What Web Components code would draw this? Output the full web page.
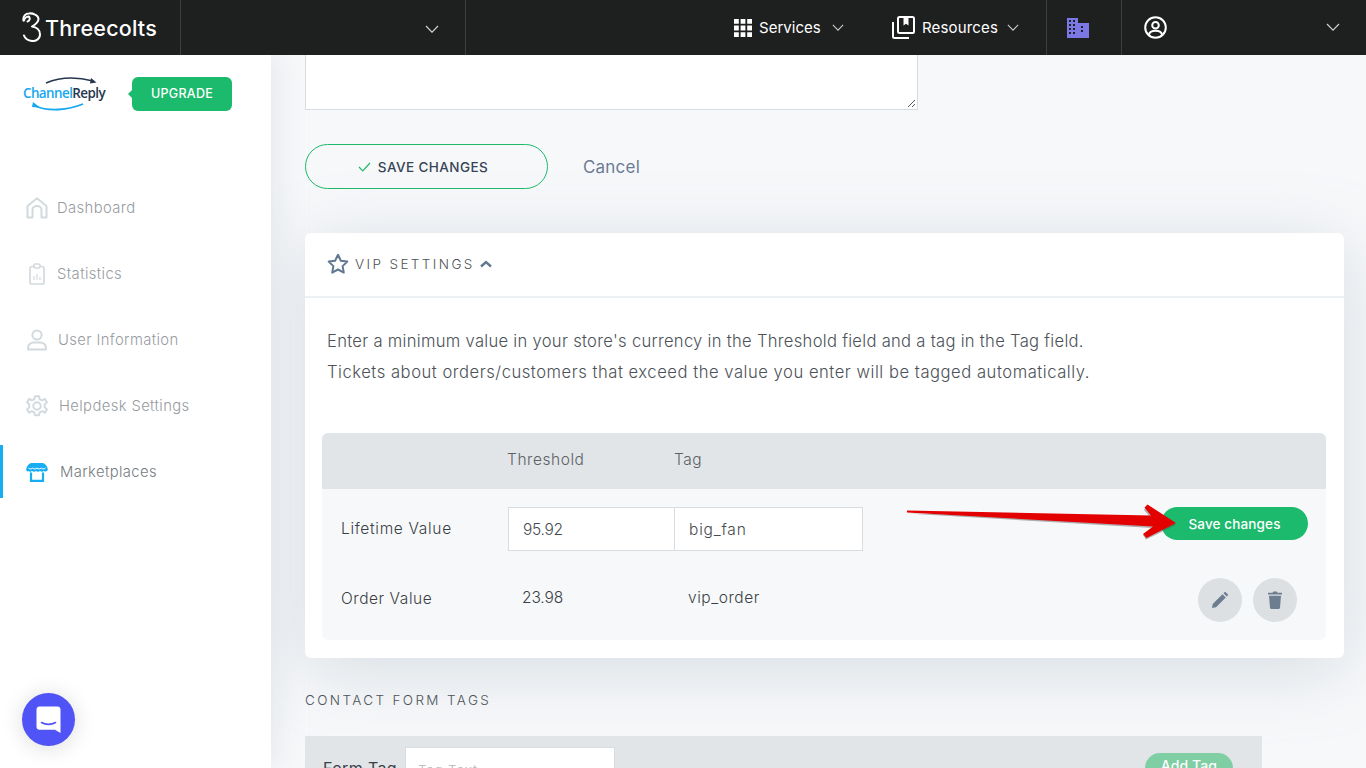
<!DOCTYPE html>
<html lang="en"><head><meta charset="utf-8"><title>ChannelReply VIP Settings</title>
<style>
html,body{margin:0;height:768px;overflow:hidden;background:#f7f8fa;font-family:Inter,"Liberation Sans",sans-serif;}
body{display:flex;flex-direction:column;position:relative}
.below{display:flex;flex:1;min-height:0}
</style></head><body>
<tc-topbar></tc-topbar>
<div class="below">
<cr-sidebar>
  <cr-nav label="Dashboard" icon="home" tx="21" ></cr-nav>
  <cr-nav label="Statistics" icon="stats" tx="21"></cr-nav>
  <cr-nav label="User Information" icon="user" tx="22"></cr-nav>
  <cr-nav label="Helpdesk Settings" icon="gear" tx="23"></cr-nav>
  <cr-nav label="Marketplaces" icon="shop" tx="24" active></cr-nav>
</cr-sidebar>
<cr-main></cr-main>
</div>
<cr-chat></cr-chat>
<cr-arrow></cr-arrow>
<script>
const chev=(w=14,c='#d0d0d0')=>`<svg width="${w}" height="${w*.6}" viewBox="0 0 14 8.4" fill="none" stroke="${c}" stroke-width="1.2"><path d="M1 1l6 6.2L13 1"/></svg>`;
class Base extends HTMLElement{connectedCallback(){if(!this.shadowRoot){this.attachShadow({mode:'open'}).innerHTML=this.html()}}}
customElements.define('tc-topbar',class extends Base{html(){return `<style>
:host{display:flex;height:55px;background:#1e1f1f;color:#fff;flex:none;align-items:stretch;font-family:Inter,sans-serif;position:relative;z-index:3}
.logo{width:180px;display:flex;align-items:center;box-sizing:border-box;padding-left:22px;gap:4px;font-size:21.5px;font-weight:500;letter-spacing:.2px}
.cell{border-left:1px solid #3e3f3f;display:flex;align-items:center;box-sizing:border-box}
.org{width:285px;justify-content:flex-end;padding-right:26px;padding-top:3px}
.nav{width:581px;padding-left:268px;gap:0;font-size:15px;font-weight:400;box-sizing:border-box;letter-spacing:.03px}
.i{display:flex;align-items:center}
.b{width:75px;padding-left:20px}
.u{flex:1;padding-left:22px;justify-content:space-between;padding-right:26px}
</style>
<div class="logo"><svg width="19" height="31" viewBox="0 0 19 31" fill="none" stroke="#fff" stroke-width="2" stroke-linecap="round" stroke-linejoin="round"><path d="M1.500 8.500C.8 4 3.500 1.500 7 1.500c3.500-.6 9.500 1.500 9.500 5.500 0 3.200-3 5.500-6.500 7.500 4.500.5 8 3.500 8 8 0 4.500-4.500 7-8 6.500-3.500-.4-7-2.500-8-5.500"/><path d="M2 8.500C2.500 6 5 4.500 7 4.500c1.500 2 .6 4.500-1.500 5"/></svg><span>Threecolts</span></div>
<div class="cell org">${chev()}</div>
<div class="cell nav">
<div class="i" style="gap:7px;width:158px"><svg width="18" height="18" viewBox="0 0 18 18" fill="#fff"><path d="M0 0h4.800v4.800H0zM6.600 0h4.800v4.800H6.600zM13.200 0H18v4.800h-4.800zM0 6.600h4.800v4.800H0zM6.600 6.600h4.800v4.800H6.600zM13.200 6.600H18v4.800h-4.800zM0 13.200h4.800V18H0zM6.600 13.200h4.800V18H6.600zM13.200 13.200H18V18h-4.800z"/></svg><span>Services</span><span style="margin-left:4px;display:flex">${chev(12)}</span></div>
<div class="i" style="gap:7px"><svg width="23" height="23" viewBox="0 0 23 23" fill="none" stroke="#fff" stroke-width="2"><rect x="6" y="1" width="16" height="16" rx="1.500"/><path d="M1 6v14.500c0 .8.700 1.500 1.500 1.500H17"/><path d="M11.500 1.500v8l2.500-1.800 2.500 1.800v-8" fill="#fff" stroke="none"/></svg><span style="letter-spacing:.16px">Resources</span><span style="margin-left:2px;display:flex">${chev(12)}</span></div>
</div>
<div class="cell b"><svg width="22" height="20" viewBox="0 0 22 20" fill="#7b78e6"><path fill-rule="evenodd" d="M0 0h11v5h11v15H0zM2 2v2h2V2zm4 0v2h2V2zM2 6v2h2V6zm4 0v2h2V6zM2 10v2h2v-2zm4 0v2h2v-2zM2 14v2h2v-2zm4 0v2h2v-2zm8-6v2h2V8zm0 4v2h2v-2z"/></svg></div>
<div class="cell u"><svg width="23" height="23" viewBox="0 0 23 23" fill="none" stroke="#fff" stroke-width="2"><circle cx="11.500" cy="11.500" r="10.300"/><circle cx="11.500" cy="9.300" r="3.300"/><path d="M4.800 19c.6-3 3.300-4.300 6.700-4.300s6.100 1.300 6.700 4.300"/></svg>${chev()}</div>`}});

customElements.define('cr-sidebar',class extends Base{html(){return `<style>
:host{display:block;width:271px;flex:none;background:#fff;box-shadow:0 0 34px rgba(170,180,190,.32);position:relative;z-index:2;font-family:Inter,sans-serif}
.head{display:flex;align-items:center;height:78px;box-sizing:border-box;padding:0 0 0 23px}
.up{position:relative;margin-left:26px;width:100px;height:34px;border-radius:6px;background:#1cba6c;color:#fff;font:500 12.500px/34px Inter,sans-serif;text-align:center;letter-spacing:.3px}
.up:before{content:"";position:absolute;left:-4px;top:13px;border:4px solid transparent;border-left:0;border-right-color:#1cba6c}
nav{display:flex;flex-direction:column;padding-top:48px}
.cr{position:relative;width:83px;height:36px;font:600 14.500px/1 "Open Sans",sans-serif;letter-spacing:-.62px;white-space:nowrap}
.cr span{position:absolute;left:0;top:10px;transform:scaleX(.925);transform-origin:0 50%}
.cr svg{position:absolute;left:0;top:0}
</style>
<div class="head"><div class="cr"><svg width="83" height="36" viewBox="0 0 83 36" fill="none"><path d="M23 7C37 1 53 .5 70 5" stroke="#26364e" stroke-width="1.600"/><path d="M68 2l5.500 4.500-6.500 1z" fill="#26364e"/><path d="M60 28C45 34 26 36 12 30" stroke="#16a7f1" stroke-width="1.800"/><path d="M10 26l-1 5 8 .5z" fill="#16a7f1"/></svg><span style="color:#16a7f1">Channel<b style="color:#26364e;font-weight:600">Reply</b></span></div><div class="up">UPGRADE</div></div>
<nav><slot></slot></nav>`}});

const icons={
home:`<svg width="22" height="22" viewBox="0 0 22 22" fill="none" stroke="#d3dade" stroke-width="2" stroke-linejoin="round"><path d="M1.500 20.500V9L11 1.300 20.500 9v11.500h-5V12.500c0-2-2-3.500-4.500-3.500s-4.500 1.500-4.500 3.500v8z"/></svg>`,
stats:`<svg width="22" height="22" viewBox="0 0 22 22" fill="none" stroke="#d3dade" stroke-width="1.700"><rect x="4" y="3.500" width="14" height="17.500" rx="2"/><rect x="8" y="1" width="6" height="4" rx="1.500" fill="#fff"/><path d="M8 17v-4M11 17v-6M14 17v-3" stroke-width="1.200"/></svg>`,
user:`<svg width="22" height="22" viewBox="0 0 22 22" fill="none" stroke="#d3dade" stroke-width="2"><circle cx="11" cy="6" r="4.600"/><path d="M2.200 20.500v-2.500c0-2.500 3-4.500 5.300-4.500h7c2.300 0 5.300 2 5.300 4.500v2.500z"/></svg>`,
gear:`<svg width="22" height="22" viewBox="0 0 22 22" fill="none" stroke="#d3dade" stroke-width="2" stroke-linejoin="round"><circle cx="11" cy="11" r="3.700"/><path d="M9 1.300h4l.7 3 2.500 1.100 2.700-1.500 2 3.300-2.200 2.200v2.800l2.200 2.200-2 3.300-2.700-1.500-2.500 1.100-.7 3H9l-.7-3-2.500-1.100-2.700 1.500-2-3.300 2.200-2.200V9.400L1.100 7.200l2-3.300 2.700 1.500 2.500-1.100z"/></svg>`,
shop:`<svg width="22" height="20" viewBox="0 0 22 20"><path d="M5 1h12c2.700 1 4.500 3.300 4.800 6.500 0 1.700-2.200 2.700-4 1.500-1.200 1-2.600 1-3.800 0-1.200 1-2.800 1-4 0-1.200 1-2.800 1-4 0-1.200 1-2.600 1-3.800 0C2.200 10.200 0 9.200.2 7.500.5 4.300 2.300 2 5 1z" fill="#16adf3"/><path d="M2.500 6c1.800 1.300 3 1.300 4.300 0 1.400 1.300 2.800 1.300 4.200 0 1.400 1.300 2.800 1.300 4.200 0 1.300 1.300 2.500 1.300 4.300 0" fill="none" stroke="#fff" stroke-width="1"/><path d="M5 10.500v8.300h12v-8.300" fill="none" stroke="#16adf3" stroke-width="2.200"/></svg>`};
customElements.define('cr-nav',class extends Base{html(){const a=this.hasAttribute('active');const lab=this.getAttribute('label');return `<style>
:host{display:flex;align-items:center;height:53px;margin-bottom:13px;box-sizing:border-box;position:relative;border-left:${a?'3px solid #16adf3':'0'};padding-left:${a?23:26}px;font:300 14.800px Inter,sans-serif;color:${a?'#767b80':'#979b9f'};letter-spacing:.38px}
span{margin-left:${this.getAttribute('tx')-12}px}
svg{display:block;flex:none}
</style>${icons[this.getAttribute('icon')]}<span>${lab}</span>`}});

customElements.define('cr-main',class extends Base{html(){return `<style>
:host{display:block;flex:1;min-width:0;padding-left:34px;font-family:Inter,sans-serif;background:#f7f8fa;overflow:hidden;position:relative}
.ta{width:613px;height:55px;box-sizing:border-box;background:#fff;border:1px solid #d8dcdf;border-top:0;position:relative}
.grip{position:absolute;right:1px;bottom:1px}
.acts{display:flex;align-items:center;margin-top:34px;height:45px}
.save{width:243px;height:45px;box-sizing:border-box;border:1px solid #1cba6c;border-radius:23px;display:flex;align-items:center;justify-content:center;gap:7px;font:500 13.500px Inter,sans-serif;color:#374456;letter-spacing:.42px;padding-right:7px}
.cancel{margin-left:35px;font:400 17px Inter,sans-serif;color:#6b7c93;letter-spacing:.2px}
.h{margin:0;font:300 13.500px Inter,sans-serif;letter-spacing:2.360px;color:#4d5358}
.ct{margin:34px 0 0;}
.bar{margin-top:28px;width:957px;height:60px;background:#e1e5e8;display:flex;align-items:flex-start;box-sizing:border-box;padding:11px 29px 0 18px;position:relative}
.bar b{font:400 16px Inter,sans-serif;color:#3c4147;margin-top:11px;letter-spacing:.35px}
.in{width:210px;height:50px;margin-left:8px;box-sizing:border-box;background:#fff;border:1px solid #d9dde0;font:300 13.500px Inter,sans-serif;color:#b3b7bb;padding:14px 12px;letter-spacing:.8px}
.add{margin-left:auto;margin-top:6px;width:88px;height:30px;background:#80cfa4;color:#fff;border-radius:15px;text-align:center;font:500 14px/26px Inter,sans-serif;letter-spacing:.1px}
</style>
<div class="ta"><svg class="grip" width="9" height="9" viewBox="0 0 9 9" stroke="#555" stroke-width="1"><path d="M8 1L1 8M8 5L5 8"/></svg></div>
<div class="acts"><div class="save"><svg width="13" height="10" viewBox="0 0 13 10" fill="none" stroke="#1cba6c" stroke-width="1.200"><path d="M1 5l3.700 3.800L12 1"/></svg><span>SAVE CHANGES</span></div><div class="cancel">Cancel</div></div>
<vip-card></vip-card>
<h3 class="h ct">CONTACT FORM TAGS</h3>
<div class="bar"><b>Form Tag</b><div class="in">Tag Text</div><div class="add">Add Tag</div></div>`}});

customElements.define('vip-card',class extends Base{html(){return `<style>
:host{display:block;width:1039px;height:425px;margin-top:44px;box-sizing:border-box;background:#fff;border-radius:6px;box-shadow:0 12px 70px rgba(140,160,172,.3);font-family:Inter,sans-serif}
.hd{height:65px;box-sizing:border-box;border-bottom:2px solid #eef1f3;display:flex;align-items:center;padding:0 0 2px 22px;color:#4d5358;font:300 13.500px Inter,sans-serif;letter-spacing:2.400px;gap:6px}
.p{margin:0;padding:28px 0 0 22px;font:300 16.600px/30.500px Inter,sans-serif;color:#4c5257;height:108px;box-sizing:border-box}
.p div{white-space:nowrap}
.tbl{margin:27px 18px 0 17px;border-radius:6px;background:#f7f8fa;height:207px;overflow:hidden;display:flex;flex-direction:column}
.r{display:grid;grid-template-columns:185px 167px 1fr;align-items:center;box-sizing:border-box}
.th{height:56px;flex:none;background:#e1e5e8;font:300 15.500px Inter,sans-serif;color:#5b6166;padding-bottom:4px;letter-spacing:.55px}
.lbl{padding-left:19px;font:300 15.500px Inter,sans-serif;color:#3a3f44}
.edit{height:44px;flex:none;margin-top:18px;grid-template-columns:186px 167px 188px 1fr;align-items:start}
.inp{height:44px;box-sizing:border-box;background:#fff;border:1px solid #d9dde0;font:300 15.500px/44px Inter,sans-serif;color:#454a4f;padding-left:14px}
.inp+.inp{border-left:0}
.edit .lbl{line-height:44px;letter-spacing:.68px}
.go{justify-self:end;margin-right:18px;width:147px;height:33px;border-radius:17px;background:#1cba6c;color:#fff;font:500 13.500px/35px Inter,sans-serif;text-align:center;letter-spacing:.14px}
.ord{height:44px;flex:none;margin-top:27px;grid-template-columns:186px 167px 1fr auto;font:300 15.500px Inter,sans-serif;color:#3a3f44;align-items:start}
.ord .v{padding-left:13px;line-height:20px;margin-top:10px}
.ord .lbl{line-height:20px;margin-top:11px;letter-spacing:.55px}
.btns{display:flex;gap:11px;padding-right:29px}
.c{width:44px;height:44px;border-radius:50%;background:#dce0e3;display:flex;align-items:center;justify-content:center}
</style>
<div class="hd"><svg width="22" height="21" viewBox="0 0 22 21" fill="none" stroke="#627891" stroke-width="2" stroke-linejoin="round"><path d="M11 1.800l2.900 6 6.400.8-4.700 4.500 1.200 6.500L11 16.500l-5.800 3.100 1.200-6.500L1.700 8.600l6.400-.8z"/></svg><span>VIP SETTINGS</span><svg width="12" height="8" viewBox="0 0 12 8" fill="none" stroke="#627891" stroke-width="2.400" style="margin-left:-1px"><path d="M1 6.500l5-4.500 5 4.500"/></svg></div>
<div class="p"><div style="letter-spacing:.29px">Enter a minimum value in your store's currency in the Threshold field and a tag in the Tag field.</div><div style="letter-spacing:.53px">Tickets about orders/customers that exceed the value you enter will be tagged automatically.</div></div>
<div class="tbl">
<div class="r th"><span></span><span>Threshold</span><span>Tag</span></div>
<div class="r edit"><span class="lbl">Lifetime Value</span><div class="inp" style="letter-spacing:-.3px">95.92</div><div class="inp" style="letter-spacing:.8px">big_fan</div><div class="go">Save changes</div></div>
<div class="r ord"><span class="lbl">Order Value</span><span class="v" style="letter-spacing:-.1px;padding-left:14px">23.98</span><span class="v" style="letter-spacing:.55px">vip_order</span><div class="btns"><div class="c"><svg width="16" height="16" viewBox="0 0 16 16" fill="#6c7d8f"><path d="M0 16l.7-4L10.500 2.200l3.300 3.300L4 15.300zM11.500 1.200l1-1c.4-.3.900-.3 1.200 0l2.100 2.100c.3.300.3.800 0 1.200l-1 1z"/></svg></div><div class="c"><svg width="14" height="18" viewBox="0 0 14 18" fill="#6c7d8f"><path d="M1 4.800h12l-1 12c-.1.700-.5 1.200-1.200 1.200H3.200c-.7 0-1.100-.5-1.200-1.200zM0 1.800h4.500L5.300.4h3.400l.8 1.400H14v1.700H0z"/></svg></div></div></div>
</div>`}});

customElements.define('cr-chat',class extends Base{html(){return `<style>
:host{position:absolute;left:22px;top:693px;width:53px;height:53px;border-radius:50%;background:#5053f5;box-shadow:0 2px 22px rgba(0,0,0,.14);display:flex;align-items:center;justify-content:center;z-index:4}
</style><svg width="25" height="27" viewBox="0 0 25 27"><path d="M3.500 0.500h18c1.700 0 3 1.300 3 3V27l-5.500-3.300H3.500c-1.700 0-3-1.300-3-3V3.500c0-1.700 1.300-3 3-3z" fill="#fff"/><path d="M5.500 16.500c4 2.500 10 2.500 14 0" fill="none" stroke="#5053f5" stroke-width="1.600" stroke-linecap="round"/></svg>`}});

customElements.define('cr-arrow',class extends Base{html(){return `<style>
:host{position:absolute;left:900px;top:500px;width:280px;height:44px;z-index:5;pointer-events:none}
svg{display:block;overflow:visible}
</style><svg width="280" height="44" viewBox="900 500 280 44"><path d="M907 512.500L1152 527l-9 7 3 4.500 30-14.500-29-19-3 4 7 8z" fill="#555" opacity=".45" transform="translate(0 1)"/><path d="M907 510.500L1151 515.500l-6.500-8 3-3 28.500 18.500-29.500 15-3.500-4 10-7.500L907 512.500z" fill="#e30000"/></svg>`}});
</script>
</body></html>
